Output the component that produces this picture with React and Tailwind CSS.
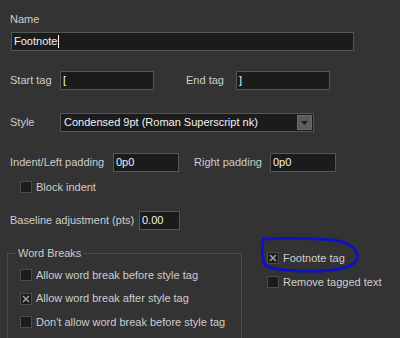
import React from "react";

function Field({ value, className = "", cursor = false }) {
  return (
    <div
      className={`h-[19px] bg-[#1b1b1b] border border-[#565656] flex items-center pl-[2px] text-[#f2f2f2] ${className}`}
    >
      <span>{value}</span>
      {cursor && <span className="w-px h-[13px] bg-white ml-px" />}
    </div>
  );
}

function Check({ checked = false, label, className = "" }) {
  return (
    <div className={`flex items-center h-[12px] ${className}`}>
      <div className="w-[12px] h-[12px] bg-[#1c1c1c] border border-[#4c4c4c] flex items-center justify-center">
        {checked && (
          <svg width="8" height="8" viewBox="0 0 8 8">
            <path d="M1 1 L7 7 M7 1 L1 7" stroke="#a8a8a8" strokeWidth="1.4" />
          </svg>
        )}
      </div>
      <span className="ml-[4px] whitespace-nowrap">{label}</span>
    </div>
  );
}

export default function App() {
  return (
    <div className="relative w-[400px] h-[338px] overflow-hidden bg-[#333333] text-[11px] leading-[13px] text-[#cdcdcd] font-['Liberation_Sans',Arial,sans-serif]">
      <div className="pl-[10px] pt-[13px]">Name</div>
      <Field value="Footnote" cursor className="mt-[6px] ml-[11px] w-[343px]" />

      {/* start / end tag */}
      <div className="flex items-center mt-[20px] pl-[10px]">
        <span className="w-[50px]">Start tag</span>
        <Field value="[" className="w-[94px]" />
        <span className="ml-[32px] w-[50px]">End tag</span>
        <Field value="]" className="w-[94px]" />
      </div>

      {/* style */}
      <div className="flex items-center mt-[23px] pl-[10px]">
        <span className="w-[50px]">Style</span>
        <div className="w-[254px] h-[19px] bg-[#1b1b1b] border border-[#565656] flex items-center justify-between pl-[3px] pr-px text-[#f2f2f2]">
          <span>Condensed 9pt (Roman Superscript nk)</span>
          <div className="w-[15px] h-[15px] bg-[#5c5c5c] border border-[#6a6a6a] flex items-center justify-center">
            <svg width="7" height="4" viewBox="0 0 7 4">
              <path d="M0 0 L7 0 L3.5 4 Z" fill="#1e1e1e" />
            </svg>
          </div>
        </div>
      </div>

      {/* padding */}
      <div className="flex items-center mt-[21px] pl-[10px]">
        <span className="w-[103px]">Indent/Left padding</span>
        <Field value="0p0" className="w-[66px]" />
        <span className="ml-[15px] w-[76px]">Right padding</span>
        <Field value="0p0" className="w-[66px]" />
      </div>

      <Check label="Block indent" className="mt-[9px] ml-[20px]" />

      <div className="flex items-center mt-[18px] pl-[10px]">
        <span className="w-[129px]">Baseline adjustment (pts)</span>
        <Field value="0.00" className="w-[41px]" />
      </div>

      {/* bottom */}
      <div className="flex mt-[23px]">
        <div className="relative ml-[7px] w-[235px] h-[120px] border border-[#4a4a4a] pt-[15px] pl-[12px]">
          <span className="absolute -top-[7px] left-[8px] bg-[#333333] px-[2px]">Word Breaks</span>
          <div className="flex flex-col gap-[11.5px]">
            <Check label="Allow word break before style tag" />
            <Check checked label="Allow word break after style tag" />
            <Check label="Don't allow word break before style tag" />
          </div>
        </div>
        <div className="ml-[25px] -mt-px flex flex-col gap-[12px]">
          <Check checked label="Footnote tag" />
          <Check label="Remove tagged text" />
        </div>
      </div>

      {/* hand-drawn highlight */}
      <svg className="absolute left-0 top-0 pointer-events-none" width="400" height="338">
        <path
          d="M263 239 C280 238 312 238 332 240 C351 242 359 250 357 259 C354 268 332 272 300 271 C282 270 267 269 264 263 C262 256 262 246 263 239 Z"
          fill="none"
          stroke="#1010c4"
          strokeWidth="2.8"
          strokeLinejoin="round"
        />
      </svg>
    </div>
  );
}
